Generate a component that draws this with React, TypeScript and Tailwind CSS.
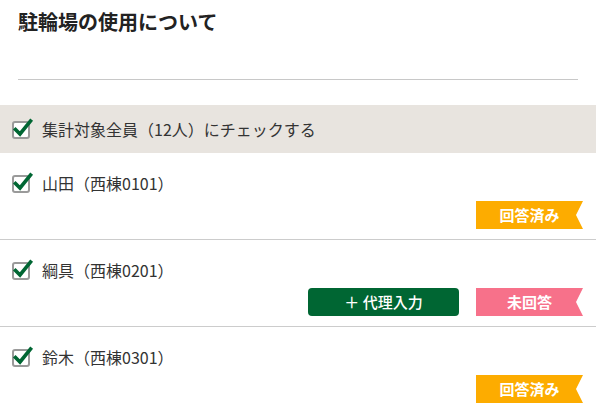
import React from 'react';

type Status = 'done' | 'none';

const members: { name: string; status: Status; proxy?: boolean }[] = [
  { name: '山田（西棟0101）', status: 'done' },
  { name: '綱具（西棟0201）', status: 'none', proxy: true },
  { name: '鈴木（西棟0301）', status: 'done' },
];

function Check() {
  return (
    <svg width="24" height="24" viewBox="0 0 24 24" className="shrink-0">
      <rect x="2" y="5" width="16" height="16" rx="2" fill="#fff" stroke="#9a9a9a" strokeWidth="2" />
      <path d="M4.5 12.5 L9 17 L19.5 4" fill="none" stroke="#006633" strokeWidth="3.6" strokeLinecap="square" />
    </svg>
  );
}

function Badge({ status }: { status: Status }) {
  const done = status === 'done';
  return (
    <div
      className={`w-[107px] h-[28px] flex items-center justify-center text-white text-[15px] font-bold ${done ? 'bg-[#fdac00]' : 'bg-[#f7718a]'} [clip-path:polygon(0_0,100%_0,calc(100%-7px)_50%,100%_100%,0_100%)]`}
    >
      {done ? '回答済み' : '未回答'}
    </div>
  );
}

export default function App() {
  return (
    <div className="w-[596px] h-[407px] overflow-hidden bg-white text-[#333] font-['Noto_Sans_CJK_JP','Noto_Sans',sans-serif]">
      <div className="px-[18px] pt-[8px]">
        <h1 className="text-[20px] leading-[28px] font-bold text-[#222]">駐輪場の使用について</h1>
        <div className="mt-[43px] border-t border-[#c8c8c8]" />
      </div>

      <div className="mt-[25px] h-[48px] bg-[#e8e4df] flex items-center pl-[11px] gap-[7px]">
        <Check />
        <span className="text-[16px] leading-[24px]">集計対象全員（12人）にチェックする</span>
      </div>

      {members.map((m, i) => (
        <div key={m.name} className={`pl-[11px] pr-[13px] pt-[18px] pb-[10px] ${i < members.length - 1 ? 'border-b border-[#cccccc]' : ''}`}>
          <div className="flex items-center gap-[7px] h-[24px]">
            <Check />
            <span className="text-[16px] leading-[24px]">{m.name}</span>
          </div>
          <div className="mt-[6px] flex justify-end items-center gap-[17px]">
            {m.proxy && (
              <button className="w-[151px] h-[28px] rounded-[4px] bg-[#006633] text-white text-[15px] font-medium">
                ＋ 代理入力
              </button>
            )}
            <Badge status={m.status} />
          </div>
        </div>
      ))}
    </div>
  );
}
